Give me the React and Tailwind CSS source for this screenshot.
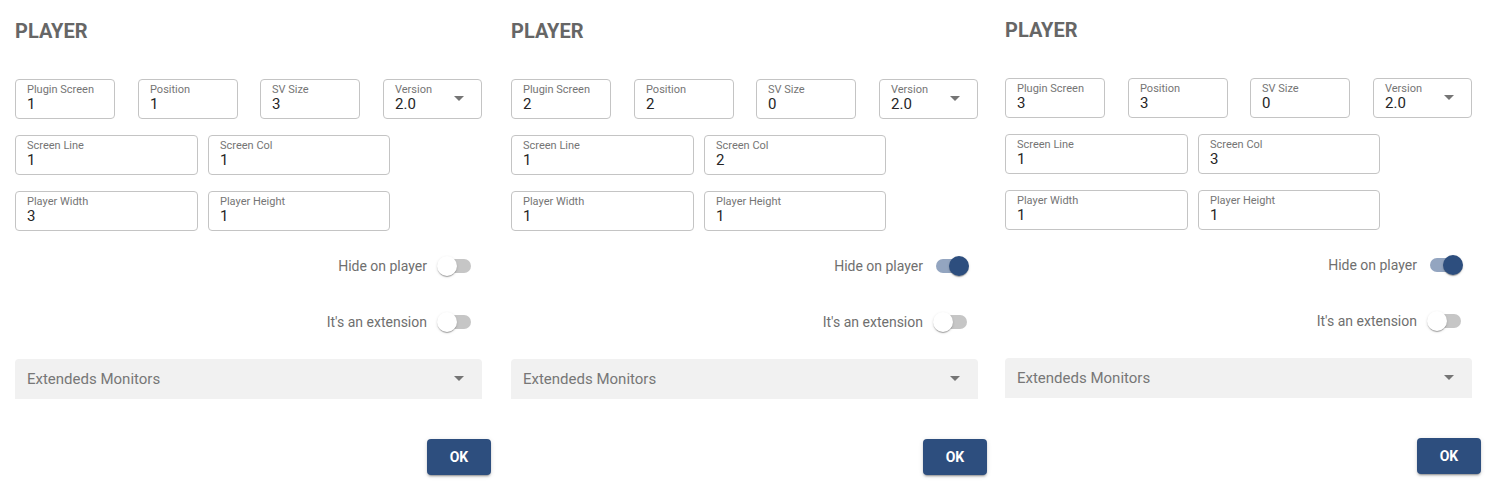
import { useState } from "react";

const PANELS = [
  { screen: "1", position: "1", sv: "3", version: "2.0", line: "1", col: "1", width: "3", height: "1", hide: false, ext: false },
  { screen: "2", position: "2", sv: "0", version: "2.0", line: "1", col: "2", width: "1", height: "1", hide: true, ext: false },
  { screen: "3", position: "3", sv: "0", version: "2.0", line: "1", col: "3", width: "1", height: "1", hide: true, ext: false },
];

function ArrowDrop({ className }) {
  return (
    <svg viewBox="0 0 24 24" className={className} fill="#757575">
      <path d="M7 10l5 5 5-5z" />
    </svg>
  );
}

function Field({ label, value, select, className = "" }) {
  return (
    <div className={"relative h-[40px] rounded-[4px] border border-[#c4c4c4] bg-white pl-[11px] pt-[4px] " + className}>
      <div className="text-[11px] leading-[12px] text-[#757575]">{label}</div>
      <div className="text-[15px] leading-[16px] text-[#262626]">{value}</div>
      {select && <ArrowDrop className="absolute right-[10px] top-[6px] h-[24px] w-[24px]" />}
    </div>
  );
}

function Toggle({ label, checked, onChange }) {
  return (
    <div className="mr-[9px] flex h-[38px] items-center justify-end gap-[10px]">
      <span className="text-[14px] text-[#6f6f6f]">{label}</span>
      <button className="relative h-[20px] w-[36px]" onClick={onChange}>
        <span
          className={
            "absolute left-[3px] top-[3px] h-[14px] w-[31px] rounded-full " +
            (checked ? "bg-[#93a5c0]" : "bg-[#c6c6c6]")
          }
        />
        <span
          className={
            "absolute top-0 h-[20px] w-[20px] rounded-full shadow-[0_2px_1px_-1px_rgba(0,0,0,0.2),0_1px_1px_0_rgba(0,0,0,0.14),0_1px_3px_0_rgba(0,0,0,0.12)] " +
            (checked ? "left-[16px] bg-[#2d4e7e]" : "left-0 bg-white")
          }
        />
      </button>
    </div>
  );
}

function Panel({ data, shift }) {
  const [hide, setHide] = useState(data.hide);
  const [ext, setExt] = useState(data.ext);

  return (
    <div className={"pl-[15px] pt-[19px] " + (shift ? "-mt-px" : "")}>
      <h2 className="text-[20px] font-bold leading-[24px] text-[#666]">PLAYER</h2>

      <div className="mt-[36px] flex">
        <Field label="Plugin Screen" value={data.screen} className="w-[100px]" />
        <Field label="Position" value={data.position} className="ml-[23px] w-[100px]" />
        <Field label="SV Size" value={data.sv} className="ml-[22px] w-[100px]" />
        <Field label="Version" value={data.version} select className="ml-[23px] w-[99px]" />
      </div>

      <div className="mt-[16px] grid w-[375px] grid-cols-[183px_182px] gap-x-[10px]">
        <Field label="Screen Line" value={data.line} />
        <Field label="Screen Col" value={data.col} />
      </div>

      <div className="mt-[16px] grid w-[375px] grid-cols-[183px_182px] gap-x-[10px]">
        <Field label="Player Width" value={data.width} />
        <Field label="Player Height" value={data.height} />
      </div>

      <div className="w-[467px]">
        <div className="mt-[16px]">
          <Toggle label="Hide on player" checked={hide} onChange={() => setHide(!hide)} />
        </div>
        <div className="mt-[18px]">
          <Toggle label="It's an extension" checked={ext} onChange={() => setExt(!ext)} />
        </div>

        <div className="relative mt-[18px] flex h-[40px] items-center rounded-t-[4px] bg-[#f1f1f1] pl-[12px]">
          <span className="text-[15px] text-[#777]">Extendeds Monitors</span>
          <ArrowDrop className="absolute right-[11px] top-[7px] h-[24px] w-[24px]" />
        </div>
      </div>

      <div className="mt-[40px] flex w-[476px] justify-end">
        <button className="h-[36px] w-[64px] rounded-[4px] bg-[#2d4e7e] text-[14px] font-bold text-white shadow-[0_3px_1px_-2px_rgba(0,0,0,0.2),0_2px_2px_0_rgba(0,0,0,0.14),0_1px_5px_0_rgba(0,0,0,0.12)]">
          OK
        </button>
      </div>
    </div>
  );
}

export default function App() {
  return (
    <div className="grid h-[481px] w-[1487px] grid-cols-[496px_494px_497px] bg-white font-['Roboto',sans-serif]">
      {PANELS.map((p, i) => (
        <Panel key={i} data={p} shift={i === 2} />
      ))}
    </div>
  );
}
